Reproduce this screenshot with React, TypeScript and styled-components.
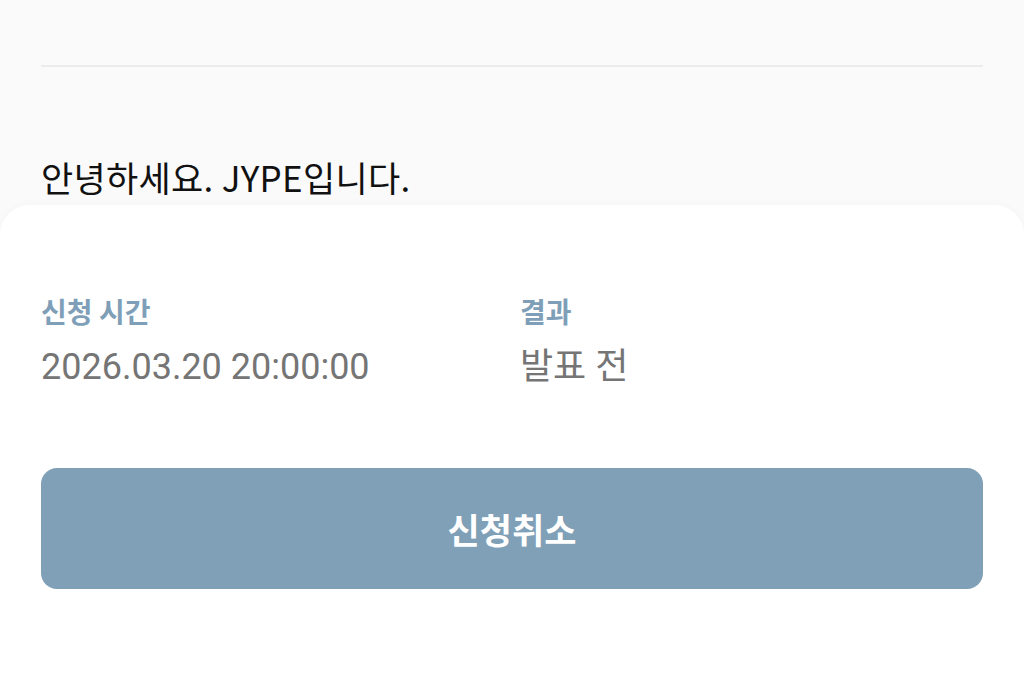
import styled, { createGlobalStyle } from "styled-components";
import React from "react";

const GlobalStyle = createGlobalStyle`
  html, body {
    margin: 0;
    padding: 0;
    background: #fafafa;
  }
  body {
    font-family: "Noto Sans CJK KR", "Noto Sans", sans-serif;
  }
`;

const App = () => {
  return (
    <Page>
      <GlobalStyle />
      <Top>
        <Divider />
        <Greeting>안녕하세요. JYPE입니다.</Greeting>
      </Top>
      <Sheet>
        <InfoGrid>
          <InfoItem>
            <InfoLabel>신청 시간</InfoLabel>
            <InfoValue>2026.03.20 20:00:00</InfoValue>
          </InfoItem>
          <InfoItem>
            <InfoLabel>결과</InfoLabel>
            <InfoValue>발표 전</InfoValue>
          </InfoItem>
        </InfoGrid>
        <CancelButton type="button">신청취소</CancelButton>
      </Sheet>
    </Page>
  );
};

export default App;

const Page = styled.div`
  width: 1024px;
  height: 691px;
  overflow: hidden;
  display: flex;
  flex-direction: column;
  background: #fafafa;
`;

const Top = styled.div`
  padding: 65px 41px 0;
  height: 140px;
  display: flex;
  flex-direction: column;
`;

const Divider = styled.hr`
  margin: 0;
  border: none;
  height: 2px;
  background: #ececec;
`;

const Greeting = styled.p`
  margin: 89px 0 0;
  font-size: 35px;
  line-height: 42px;
  color: #111;
  letter-spacing: 0.3px;
`;

const Sheet = styled.div`
  flex: 1;
  background: #fff;
  border-radius: 30px 30px 0 0;
  box-shadow: 0 -2px 8px rgba(0, 0, 0, 0.02);
  padding: 88px 41px 0;
  display: flex;
  flex-direction: column;
`;

const InfoGrid = styled.div`
  display: grid;
  grid-template-columns: 479px 1fr;
`;

const InfoItem = styled.div`
  display: flex;
  flex-direction: column;
  gap: 16px;
`;

const InfoLabel = styled.span`
  font-size: 28px;
  line-height: 36px;
  font-weight: 600;
  color: #7f9fb8;
`;

const InfoValue = styled.span`
  font-family: "Roboto", "Noto Sans CJK KR", sans-serif;
  font-size: 36px;
  line-height: 44px;
  color: #757575;
`;

const CancelButton = styled.button`
  margin-top: 79px;
  height: 121px;
  border: none;
  border-radius: 16px;
  background: #80a0b7;
  color: #fff;
  font-family: "Noto Sans CJK KR", sans-serif;
  font-size: 35px;
  font-weight: 700;
  cursor: pointer;
`;
